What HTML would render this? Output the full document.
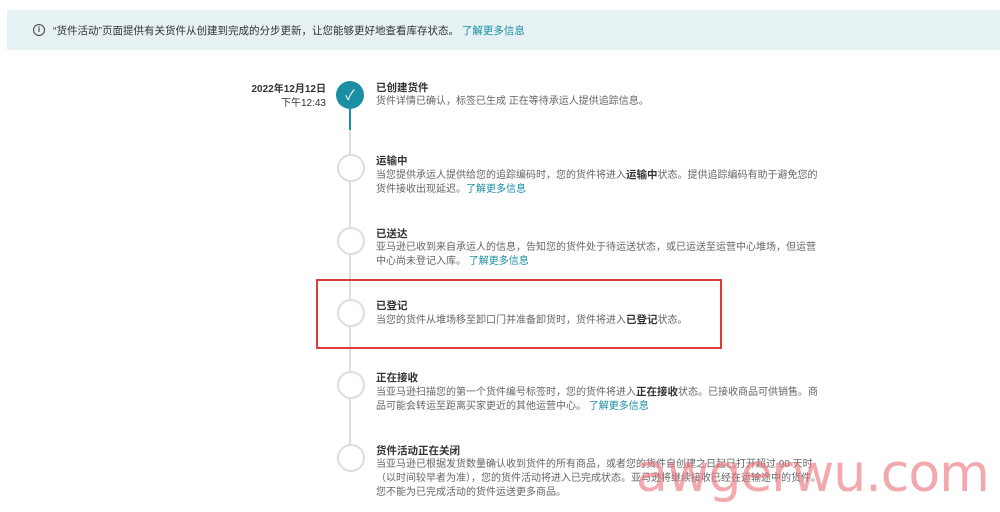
<!DOCTYPE html>
<html><head><meta charset="utf-8"><style>
body{margin:0;width:1000px;height:512px;background:#fff;position:relative;overflow:hidden;font-family:"Liberation Sans","Noto Sans CJK SC",sans-serif;color:#666;font-size:10px}
.banner{position:absolute;left:7px;top:10px;width:993px;height:40px;background:#e6f1f3}
.banner span{position:absolute;left:46px;top:13px;font-size:10.5px;color:#333}
.ic{position:absolute;left:26px;top:14px;width:10px;height:10px;border:1.3px solid #444;border-radius:50%;font-size:8px;line-height:10px;text-align:center;color:#444;font-weight:bold}
a{color:#1a8ea3;text-decoration:none}
.line{position:absolute;left:349px;width:2px;background:#ddd}
.c{position:absolute;left:337px;width:24px;height:24px;border:2px solid #ddd;border-radius:50%;background:#fff}
.t{position:absolute;left:376px;line-height:14px;width:446px}
.t b{color:#333;font-weight:bold;display:block;font-size:10.5px}
.date{position:absolute;right:674px;top:83px;text-align:right;line-height:14px;color:#333}
.box{position:absolute;left:316px;top:279px;width:402px;height:66px;border:2px solid #e03a3a}
.wm{position:absolute;left:636px;top:444px;font-size:52px;color:rgba(235,110,120,.6);font-family:"DejaVu Sans",sans-serif;letter-spacing:-1px}
</style></head><body>
<div class="banner"><div class="ic">i</div><span>“货件活动”页面提供有关货件从创建到完成的分步更新，让您能够更好地查看库存状态。 <a>了解更多信息</a></span></div>
<div class="date"><b>2022年12月12日</b><br>下午12:43</div>
<div class="line" style="top:108px;height:22px;background:#1a8ea3"></div>
<div class="line" style="top:130px;height:340px"></div>
<div class="c" style="top:81px;left:336px;width:28px;height:28px;border:0;background:#1a8ea3;color:#fff;text-align:center;line-height:28px;font-size:14px">✓</div>
<div class="t" style="top:81px"><b>已创建货件</b>货件详情已确认，标签已生成 正在等待承运人提供追踪信息。</div>
<div class="c" style="top:154px"></div>
<div class="t" style="top:154px"><b>运输中</b>当您提供承运人提供给您的追踪编码时，您的货件将进入<b style="display:inline">运输中</b>状态。提供追踪编码有助于避免您的货件接收出现延迟。<a>了解更多信息</a></div>
<div class="c" style="top:227px"></div>
<div class="t" style="top:227px"><b>已送达</b>亚马逊已收到来自承运人的信息，告知您的货件处于待运送状态，或已运送至运营中心堆场，但运营中心尚未登记入库。 <a>了解更多信息</a></div>
<div class="c" style="top:299px"></div>
<div class="t" style="top:299px"><b>已登记</b>当您的货件从堆场移至卸口门并准备卸货时，货件将进入<b style="display:inline">已登记</b>状态。</div>
<div class="box"></div>
<div class="c" style="top:371px"></div>
<div class="t" style="top:371px"><b>正在接收</b>当亚马逊扫描您的第一个货件编号标签时，您的货件将进入<b style="display:inline">正在接收</b>状态。已接收商品可供销售。商品可能会转运至距离买家更近的其他运营中心。 <a>了解更多信息</a></div>
<div class="c" style="top:444px"></div>
<div class="t" style="top:444px"><b>货件活动正在关闭</b>当亚马逊已根据发货数量确认收到货件的所有商品，或者您的货件自创建之日起已打开超过 90 天时（以时间较早者为准），您的货件活动将进入已完成状态。亚马逊将继续接收已经在运输途中的货件。您不能为已完成活动的货件运送更多商品。</div>
<div class="wm">awgerwu.com</div>
</body></html>
